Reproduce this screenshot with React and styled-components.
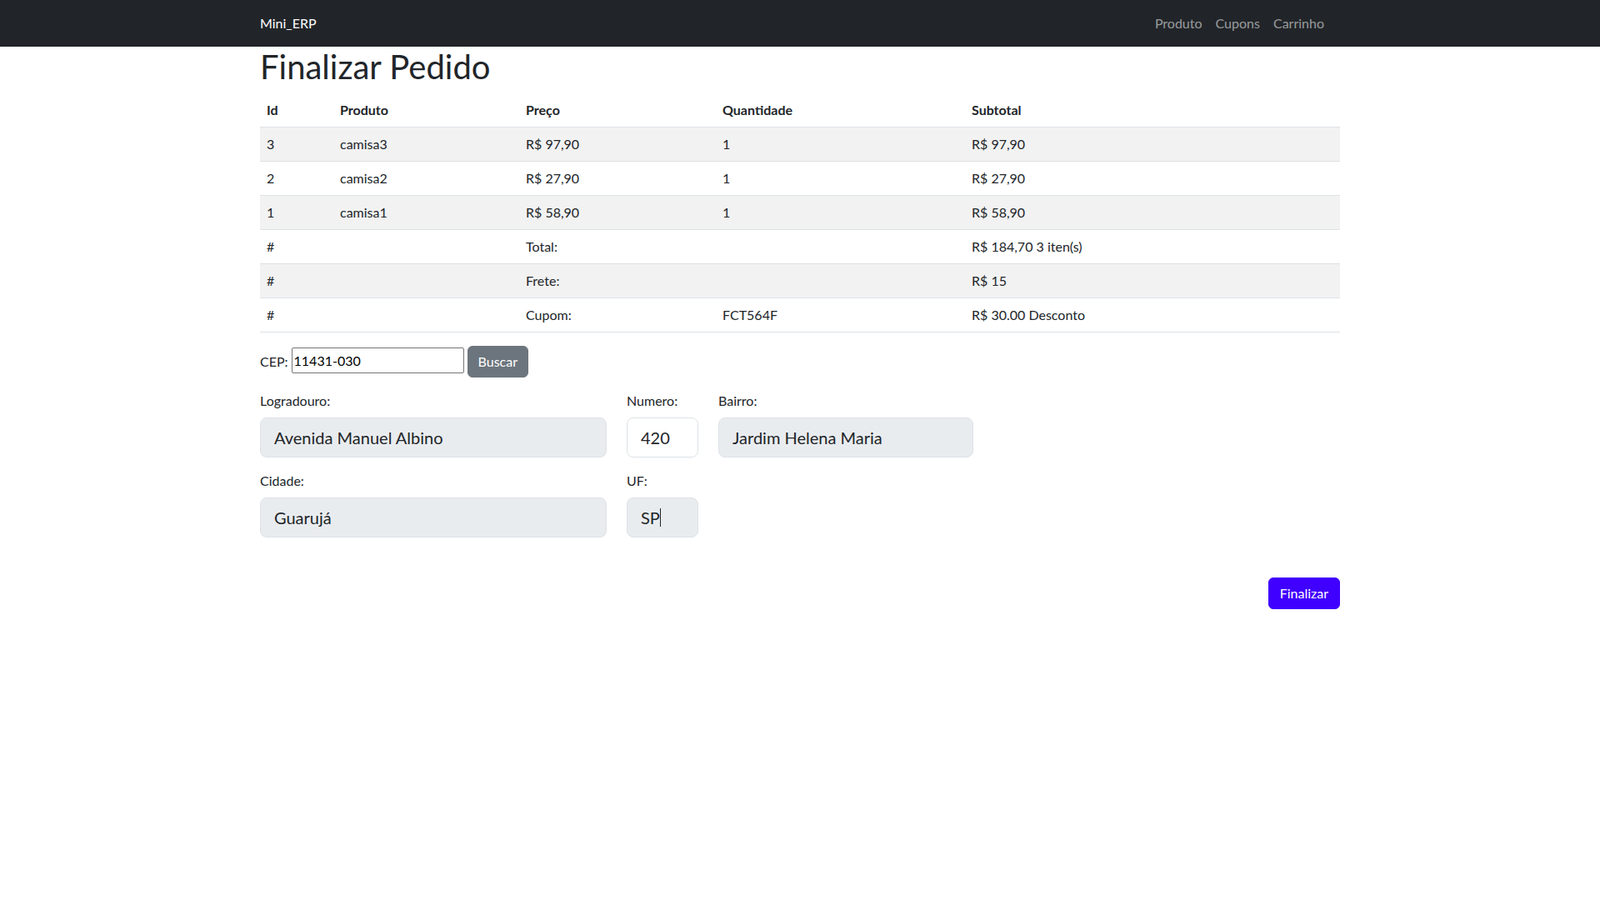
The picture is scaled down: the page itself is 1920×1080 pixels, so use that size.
import React from "react";
import styled, { createGlobalStyle } from "styled-components";

const GlobalStyle = createGlobalStyle`
	* {
		box-sizing: border-box;
	}
	body {
		margin: 0;
		font-family: Lato, "Noto Sans", "Liberation Sans", sans-serif;
		font-size: 16px;
		line-height: 1.5;
		color: #212529;
		background: #fff;
	}
`;

const itens = [
	{ id: 3, nome: "camisa3", preco: "R$ 97,90", qtd: 1, subtotal: "R$ 97,90" },
	{ id: 2, nome: "camisa2", preco: "R$ 27,90", qtd: 1, subtotal: "R$ 27,90" },
	{ id: 1, nome: "camisa1", preco: "R$ 58,90", qtd: 1, subtotal: "R$ 58,90" },
];

const resumo = [
	{ label: "Total:", extra: "", valor: "R$ 184,70 3 iten(s)" },
	{ label: "Frete:", extra: "", valor: "R$ 15" },
	{ label: "Cupom:", extra: "FCT564F", valor: "R$ 30.00 Desconto" },
];

const App = () => {
	return (
		<>
			<GlobalStyle />
			<Navbar>
				<NavInner>
					<Brand>Mini_ERP</Brand>
					<NavLinks>
						<NavLink>Produto</NavLink>
						<NavLink>Cupons</NavLink>
						<NavLink>Carrinho</NavLink>
					</NavLinks>
				</NavInner>
			</Navbar>
			<Container>
				<Title>Finalizar Pedido</Title>
				<Table>
					<thead>
						<tr>
							<Th width={88}>Id</Th>
							<Th width={223}>Produto</Th>
							<Th width={236}>Preço</Th>
							<Th width={299}>Quantidade</Th>
							<Th>Subtotal</Th>
						</tr>
					</thead>
					<tbody>
						{[...itens, ...resumo].map((row, i) => (
							<Tr key={i} striped={i % 2 === 0}>
								<Td>{row.id !== undefined ? row.id : "#"}</Td>
								<Td>{row.nome || ""}</Td>
								<Td>{row.preco || row.label}</Td>
								<Td>{row.qtd !== undefined ? row.qtd : row.extra}</Td>
								<Td>{row.subtotal || row.valor}</Td>
							</Tr>
						))}
					</tbody>
				</Table>

				<CepRow>
					CEP: <CepInput defaultValue="11431-030" /> <SearchBtn>Buscar</SearchBtn>
				</CepRow>

				<FormRow>
					<Field width={416}>
						<Label>Logradouro:</Label>
						<Input readOnly locked defaultValue="Avenida Manuel Albino" />
					</Field>
					<Field width={86}>
						<Label>Numero:</Label>
						<Input defaultValue="420" />
					</Field>
					<Field width={306}>
						<Label>Bairro:</Label>
						<Input readOnly locked defaultValue="Jardim Helena Maria" />
					</Field>
				</FormRow>
				<FormRow>
					<Field width={416}>
						<Label>Cidade:</Label>
						<Input readOnly locked defaultValue="Guarujá" />
					</Field>
					<Field width={86}>
						<Label>UF:</Label>
						<InputWrap>
							<Input readOnly locked defaultValue="SP" />
							<Caret />
						</InputWrap>
					</Field>
				</FormRow>

				<Actions>
					<FinishBtn>Finalizar</FinishBtn>
				</Actions>
			</Container>
		</>
	);
};

const Navbar = styled.nav`
	background-color: #212529;
	padding: 8px 0;
`;

const NavInner = styled.div`
	width: 1296px;
	margin: 0 auto;
	display: flex;
	justify-content: space-between;
	align-items: center;
`;

const Brand = styled.span`
	color: #fff;
	font-size: 16px;
	line-height: 24px;
`;

const NavLinks = styled.div`
	display: flex;
	margin-right: 11px;
`;

const NavLink = styled.span`
	color: rgba(255, 255, 255, 0.55);
	padding: 8px;
	line-height: 24px;
	cursor: pointer;
`;

const Container = styled.main`
	width: 1296px;
	margin: 0 auto;
`;

const Title = styled.h1`
	font-size: 40px;
	font-weight: 400;
	line-height: 1.2;
	margin: 0 0 8px;
`;

const Table = styled.table`
	width: 100%;
	border-collapse: collapse;
	margin-bottom: 16px;
	table-layout: fixed;
`;

const Th = styled.th`
	width: ${(p) => (p.width ? `${p.width}px` : "auto")};
	text-align: left;
	font-weight: 700;
	padding: 8px;
	border-bottom: 1px solid #dee2e6;
`;

const Tr = styled.tr`
	background-color: ${(p) => (p.striped ? "#f2f2f2" : "#fff")};
`;

const Td = styled.td`
	padding: 8px;
	border-bottom: 1px solid #dee2e6;
	line-height: 24px;
`;

const CepRow = styled.div`
	display: flex;
	align-items: center;
	gap: 4px;
	height: 38px;
	margin-bottom: 16px;
	line-height: 24px;
`;

const CepInput = styled.input`
	font: inherit;
	color: #000;
	width: 207px;
	height: 31px;
	padding: 1px 2px;
	margin-top: -3px;
	border: 1px solid #767676;
	border-radius: 2px;
`;

const SearchBtn = styled.button`
	font: inherit;
	line-height: 24px;
	color: #fff;
	background-color: #6c757d;
	border: 1px solid #6c757d;
	border-radius: 6px;
	padding: 6px 12px;
	cursor: pointer;
`;

const FormRow = styled.div`
	display: flex;
	gap: 24px;
`;

const Field = styled.div`
	width: ${(p) => p.width}px;
	margin-bottom: 16px;
`;

const Label = styled.label`
	display: block;
	margin-bottom: 8px;
	line-height: 24px;
`;

const InputWrap = styled.div`
	position: relative;
`;

const Input = styled.input`
	display: block;
	width: 100%;
	font: inherit;
	font-size: 20px;
	line-height: 30px;
	padding: 8px 16px;
	color: #212529;
	background-color: ${(p) => (p.locked ? "#e9ecef" : "#fff")};
	border: 1px solid #dee2e6;
	border-radius: 8px;
	outline: none;
`;

const Caret = styled.span`
	position: absolute;
	left: 40px;
	top: 13px;
	width: 1px;
	height: 22px;
	background: #212529;
`;

const Actions = styled.div`
	display: flex;
	justify-content: flex-end;
	margin-top: 32px;
`;

const FinishBtn = styled.button`
	font: inherit;
	line-height: 24px;
	color: #fff;
	background-color: #4000ff;
	border: 1px solid #4000ff;
	border-radius: 6px;
	padding: 6px 13px;
	cursor: pointer;
`;

export default App;
